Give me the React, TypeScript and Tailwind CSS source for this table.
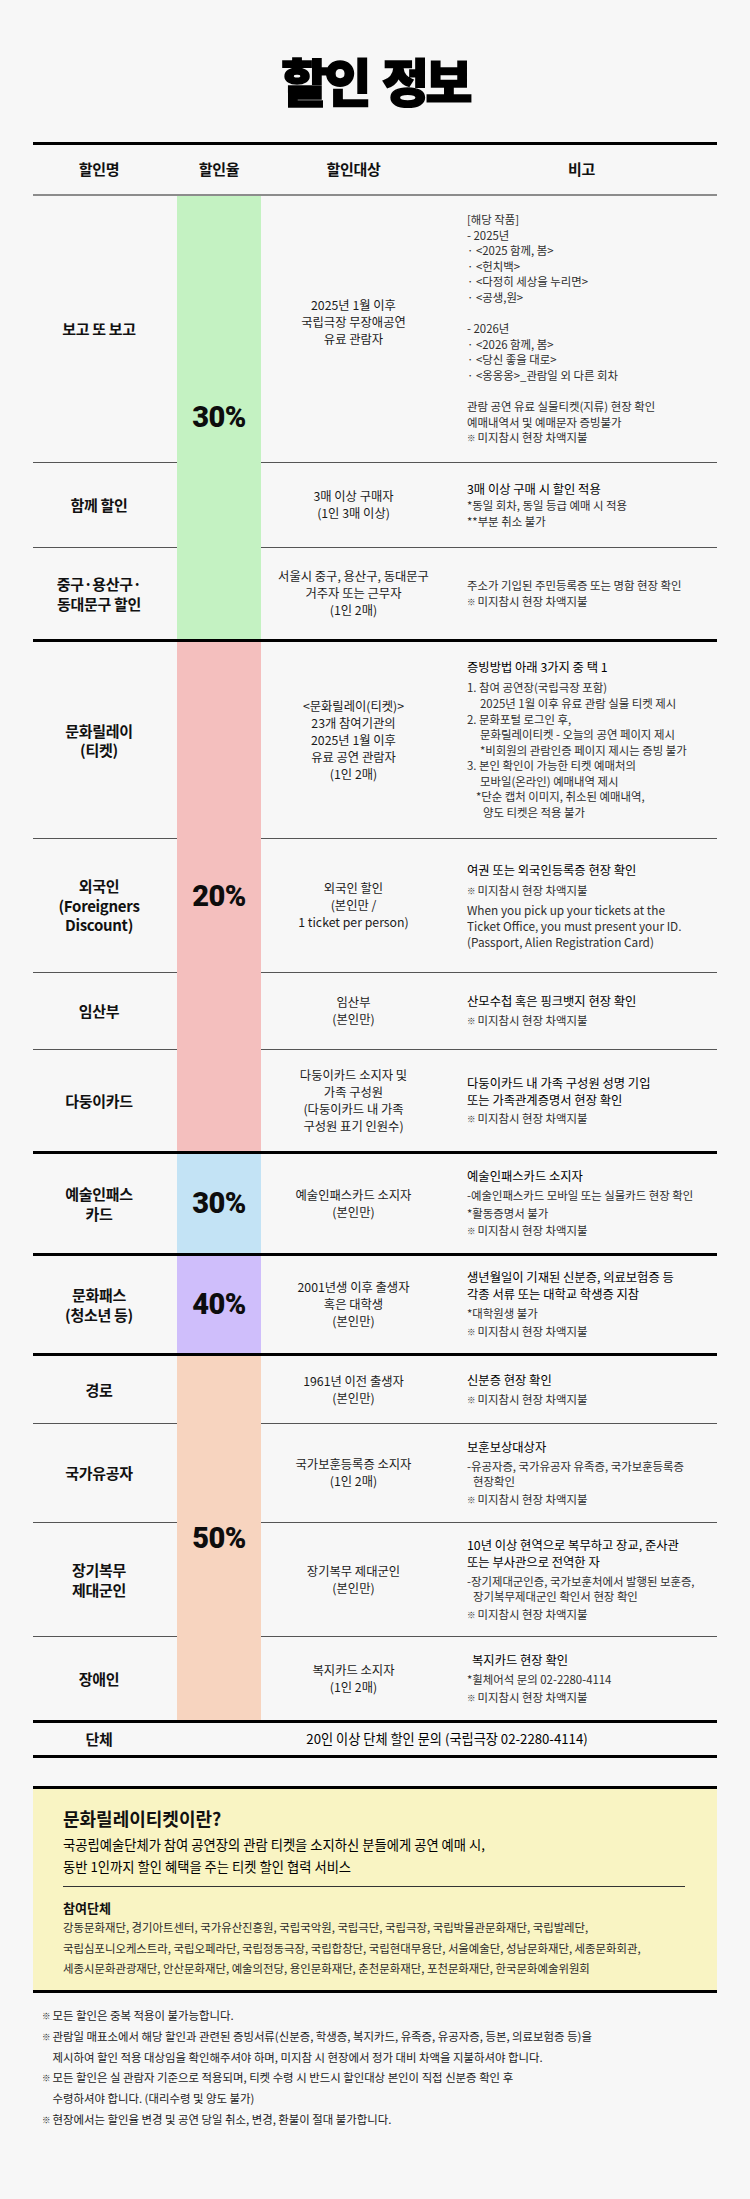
import React from "react";

type RowData = {
  h: string;
  label: React.ReactNode;
  target: React.ReactNode;
  note: React.ReactNode;
  targetClass?: string;
};

const Kome = () => <span className="text-[8.5px] mr-[2px] align-[1px]">※</span>;

function H({ children, className = "" }: { children: React.ReactNode; className?: string }) {
  return <div className={"text-[12.3px] leading-[17px] font-normal text-black " + className}>{children}</div>;
}

function S({ children, className = "" }: { children: React.ReactNode; className?: string }) {
  return <div className={"text-[11.4px] leading-[15.6px] text-[#2e2e2e] " + className}>{children}</div>;
}

function Lines({ items }: { items: string[] }) {
  return (
    <div className="text-[12.3px] leading-[17px] text-center text-[#1a1a1a] whitespace-nowrap">
      {items.map((t, i) => (
        <div key={i}>{t}</div>
      ))}
    </div>
  );
}

function Label({ lines, className = "" }: { lines: string[]; className?: string }) {
  return (
    <div className={"text-[15px] font-bold leading-[19.5px] tracking-[-0.02em] text-center text-[#111] " + className}>
      {lines.map((t, i) => (
        <div key={i}>{t}</div>
      ))}
    </div>
  );
}

const Miji = ({ className = "mt-[2px]" }: { className?: string }) => (
  <S className={className}>
    <Kome />
    미지참시 현장 차액지불
  </S>
);

function Group({ bg, pct, span, rows }: { bg: string; pct: string; span: string; rows: RowData[] }) {
  return (
    <div className="grid grid-cols-[144px_84px_185px_1fr] border-t-[3px] border-black">
      <div className={span + " col-start-2 flex items-center justify-center " + bg}>
        <span className="[font-family:Roboto,'Liberation_Sans',sans-serif] font-black text-[29px] leading-none tracking-[-0.02em] text-[#0d0d0d]">
          {pct}
        </span>
      </div>
      {rows.map((r, i) => (
        <React.Fragment key={i}>
          <div
            className={
              "col-start-1 flex items-center justify-center pr-3 " +
              r.h +
              (i > 0 ? " border-t border-[#555]" : "")
            }
          >
            {r.label}
          </div>
          <div
            className={
              "col-start-3 flex items-center justify-center " +
              (r.targetClass ?? "") +
              (i > 0 ? " border-t border-[#555]" : "")
            }
          >
            {r.target}
          </div>
          <div
            className={
              "col-start-4 flex flex-col justify-center pl-[21px] whitespace-nowrap" +
              (i > 0 ? " border-t border-[#555]" : "")
            }
          >
            {r.note}
          </div>
        </React.Fragment>
      ))}
    </div>
  );
}

const g1: RowData[] = [
  {
    h: "h-[266px]",
    label: <Label lines={["보고 또 보고"]} />,
    targetClass: "pb-[14px]",
    target: <Lines items={["2025년 1월 이후", "국립극장 무장애공연", "유료 관람자"]} />,
    note: (
      <div>
        <S>[해당 작품]</S>
        <S>- 2025년</S>
        <S>· &lt;2025 함께, 봄&gt;</S>
        <S>· &lt;헌치백&gt;</S>
        <S>· &lt;다정히 세상을 누리면&gt;</S>
        <S>· &lt;공생,원&gt;</S>
        <S>&nbsp;</S>
        <S>- 2026년</S>
        <S>· &lt;2026 함께, 봄&gt;</S>
        <S>· &lt;당신 좋을 대로&gt;</S>
        <S>· &lt;옹옹옹&gt;_관람일 외 다른 회차</S>
        <S>&nbsp;</S>
        <S>관람 공연 유료 실물티켓(지류) 현장 확인</S>
        <S>예매내역서 및 예매문자 증빙불가</S>
        <S>
          <Kome />
          미지참시 현장 차액지불
        </S>
      </div>
    ),
  },
  {
    h: "h-[85px]",
    label: <Label lines={["함께 할인"]} />,
    target: <Lines items={["3매 이상 구매자", "(1인 3매 이상)"]} />,
    note: (
      <div>
        <H>3매 이상 구매 시 할인 적용</H>
        <S>*동일 회차, 동일 등급 예매 시 적용</S>
        <S>**부분 취소 불가</S>
      </div>
    ),
  },
  {
    h: "h-[92px]",
    label: <Label lines={["중구·용산구·", "동대문구 할인"]} />,
    target: <Lines items={["서울시 중구, 용산구, 동대문구", "거주자 또는 근무자", "(1인 2매)"]} />,
    note: (
      <div>
        <S>주소가 기입된 주민등록증 또는 명함 현장 확인</S>
        <Miji className="" />
      </div>
    ),
  },
];

const g2: RowData[] = [
  {
    h: "h-[196px]",
    label: <Label lines={["문화릴레이", "(티켓)"]} />,
    target: (
      <Lines items={["<문화릴레이(티켓)>", "23개 참여기관의", "2025년 1월 이후", "유료 공연 관람자", "(1인 2매)"]} />
    ),
    note: (
      <div>
        <H className="mb-[4px]">증빙방법 아래 3가지 중 택 1</H>
        <S>1. 참여 공연장(국립극장 포함)</S>
        <S className="pl-[13px]">2025년 1월 이후 유료 관람 실물 티켓 제시</S>
        <S>2. 문화포털 로그인 후,</S>
        <S className="pl-[13px]">문화릴레이티켓 - 오늘의 공연 페이지 제시</S>
        <S className="pl-[13px]">*비회원의 관람인증 페이지 제시는 증빙 불가</S>
        <S>3. 본인 확인이 가능한 티켓 예매처의</S>
        <S className="pl-[13px]">모바일(온라인) 예매내역 제시</S>
        <S className="pl-[9px]">*단순 캡처 이미지, 취소된 예매내역,</S>
        <S className="pl-[16px]">양도 티켓은 적용 불가</S>
      </div>
    ),
  },
  {
    h: "h-[134px]",
    label: <Label lines={["외국인", "(Foreigners", "Discount)"]} className="leading-[18.5px]" />,
    target: <Lines items={["외국인 할인", "(본인만 /", "1 ticket per person)"]} />,
    note: (
      <div>
        <H>여권 또는 외국인등록증 현장 확인</H>
        <Miji className="mt-[4px]" />
        <div className="mt-[4px] text-[11.8px] leading-[15.6px] text-[#2e2e2e]">
          <div>When you pick up your tickets at the</div>
          <div>Ticket Office, you must present your ID.</div>
          <div>(Passport, Alien Registration Card)</div>
        </div>
      </div>
    ),
  },
  {
    h: "h-[77px]",
    label: <Label lines={["임산부"]} />,
    target: <Lines items={["임산부", "(본인만)"]} />,
    note: (
      <div>
        <H>산모수첩 혹은 핑크뱃지 현장 확인</H>
        <Miji className="mt-[3px]" />
      </div>
    ),
  },
  {
    h: "h-[102px]",
    label: <Label lines={["다둥이카드"]} />,
    target: <Lines items={["다둥이카드 소지자 및", "가족 구성원", "(다둥이카드 내 가족", "구성원 표기 인원수)"]} />,
    note: (
      <div>
        <H>다둥이카드 내 가족 구성원 성명 기입</H>
        <H>또는 가족관계증명서 현장 확인</H>
        <Miji className="mt-[2px]" />
      </div>
    ),
  },
];

const g3: RowData[] = [
  {
    h: "h-[99px]",
    label: <Label lines={["예술인패스", "카드"]} />,
    target: <Lines items={["예술인패스카드 소지자", "(본인만)"]} />,
    note: (
      <div>
        <H>예술인패스카드 소지자</H>
        <S className="mt-[3px]">-예술인패스카드 모바일 또는 실물카드 현장 확인</S>
        <S className="mt-[2px]">*활동증명서 불가</S>
        <Miji />
      </div>
    ),
  },
];

const g4: RowData[] = [
  {
    h: "h-[97px]",
    label: <Label lines={["문화패스", "(청소년 등)"]} />,
    target: <Lines items={["2001년생 이후 출생자", "혹은 대학생", "(본인만)"]} />,
    note: (
      <div>
        <H>생년월일이 기재된 신분증, 의료보험증 등</H>
        <H>각종 서류 또는 대학교 학생증 지참</H>
        <S className="mt-[3px]">*대학원생 불가</S>
        <Miji />
      </div>
    ),
  },
];

const g5: RowData[] = [
  {
    h: "h-[67px]",
    label: <Label lines={["경로"]} />,
    target: <Lines items={["1961년 이전 출생자", "(본인만)"]} />,
    note: (
      <div>
        <H>신분증 현장 확인</H>
        <Miji className="mt-[3px]" />
      </div>
    ),
  },
  {
    h: "h-[99px]",
    label: <Label lines={["국가유공자"]} />,
    target: <Lines items={["국가보훈등록증 소지자", "(1인 2매)"]} />,
    note: (
      <div>
        <H>보훈보상대상자</H>
        <S className="mt-[3px]">-유공자증, 국가유공자 유족증, 국가보훈등록증</S>
        <S className="pl-[6px]">현장확인</S>
        <Miji />
      </div>
    ),
  },
  {
    h: "h-[114px]",
    label: <Label lines={["장기복무", "제대군인"]} />,
    target: <Lines items={["장기복무 제대군인", "(본인만)"]} />,
    note: (
      <div>
        <H>10년 이상 현역으로 복무하고 장교, 준사관</H>
        <H>또는 부사관으로 전역한 자</H>
        <S className="mt-[3px]">-장기제대군인증, 국가보훈처에서 발행된 보훈증,</S>
        <S className="pl-[6px]">장기복무제대군인 확인서 현장 확인</S>
        <Miji />
      </div>
    ),
  },
  {
    h: "h-[84px]",
    label: <Label lines={["장애인"]} />,
    target: <Lines items={["복지카드 소지자", "(1인 2매)"]} />,
    note: (
      <div>
        <H className="pl-[5px]">복지카드 현장 확인</H>
        <S className="mt-[3px]">*휠체어석 문의 02-2280-4114</S>
        <Miji />
      </div>
    ),
  },
];

export default function App() {
  return (
    <div className="w-[750px] min-h-[2199px] bg-[#f7f7f7] text-[#1a1a1a] [font-family:'Noto_Sans_CJK_KR','Noto_Sans_KR',sans-serif]">
      {/* Title */}
      <div className="h-[142px] pt-[55px] text-center">
        <h1 className="text-[51px] leading-none font-black tracking-[-0.07em] [word-spacing:0.12em] [-webkit-text-stroke:1.6px_black] text-black">
          할인 정보
        </h1>
      </div>

      <div className="mx-[33px]">
        {/* Header */}
        <div className="grid grid-cols-[144px_84px_185px_1fr] h-[54px] border-t-[3px] border-b-2 border-t-black border-b-[#8c8c8c] text-[15px] font-bold tracking-[-0.02em] text-[#111]">
          <div className="flex items-center justify-center pr-3">할인명</div>
          <div className="flex items-center justify-center">할인율</div>
          <div className="flex items-center justify-center">할인대상</div>
          <div className="flex items-center justify-center">비고</div>
        </div>

        <div className="[&>div:first-child]:border-t-0">
          <Group bg="bg-[#c4f2c2]" pct="30%" span="row-[1/span_3]" rows={g1} />
        </div>
        <Group bg="bg-[#f4bfbe]" pct="20%" span="row-[1/span_4]" rows={g2} />
        <Group bg="bg-[#c3e3f5]" pct="30%" span="row-[1/span_1]" rows={g3} />
        <Group bg="bg-[#cfbefb]" pct="40%" span="row-[1/span_1]" rows={g4} />
        <Group bg="bg-[#f7d4bf]" pct="50%" span="row-[1/span_4]" rows={g5} />

        {/* 단체 */}
        <div className="grid grid-cols-[144px_1fr] h-[38px] border-t-[3px] border-b-[3px] border-black">
          <div className="flex items-center justify-center pr-3">
            <Label lines={["단체"]} />
          </div>
          <div className="flex items-center justify-center text-[13.2px] font-normal text-black">
            20인 이상 단체 할인 문의 (국립극장 02-2280-4114)
          </div>
        </div>

        {/* Info box */}
        <div className="mt-[28px] h-[207px] border-t-[3px] border-b-[3px] border-black bg-[#f9f4c3] pl-[30px] pr-[32px] pt-[16px]">
          <div className="text-[18px] leading-[26px] font-bold text-[#111]">문화릴레이티켓이란?</div>
          <div className="mt-[3px] text-[13.3px] leading-[22px] font-normal text-black">
            <div>국공립예술단체가 참여 공연장의 관람 티켓을 소지하신 분들에게 공연 예매 시,</div>
            <div>동반 1인까지 할인 혜택을 주는 티켓 할인 협력 서비스</div>
          </div>
          <div className="mt-[8px] h-px bg-[#333]" />
          <div className="mt-[12px] text-[13px] leading-[18px] font-bold text-[#111]">참여단체</div>
          <div className="text-[11.4px] leading-[20.5px] text-[#2a2a2a] whitespace-nowrap">
            <div>강동문화재단, 경기아트센터, 국가유산진흥원, 국립국악원, 국립극단, 국립극장, 국립박물관문화재단, 국립발레단,</div>
            <div>국립심포니오케스트라, 국립오페라단, 국립정동극장, 국립합창단, 국립현대무용단, 서울예술단, 성남문화재단, 세종문화회관,</div>
            <div>세종시문화관광재단, 안산문화재단, 예술의전당, 용인문화재단, 춘천문화재단, 포천문화재단, 한국문화예술위원회</div>
          </div>
        </div>
      </div>

      {/* Notes */}
      <div className="mt-[12px] pl-[42px] text-[11.4px] leading-[20.8px] text-[#222]">
        {[
          ["모든 할인은 중복 적용이 불가능합니다."],
          [
            "관람일 매표소에서 해당 할인과 관련된 증빙서류(신분증, 학생증, 복지카드, 유족증, 유공자증, 등본, 의료보험증 등)을",
            "제시하여 할인 적용 대상임을 확인해주셔야 하며, 미지참 시 현장에서 정가 대비 차액을 지불하셔야 합니다.",
          ],
          [
            "모든 할인은 실 관람자 기준으로 적용되며, 티켓 수령 시 반드시 할인대상 본인이 직접 신분증 확인 후",
            "수령하셔야 합니다. (대리수령 및 양도 불가)",
          ],
          ["현장에서는 할인율 변경 및 공연 당일 취소, 변경, 환불이 절대 불가합니다."],
        ].map((lines, i) => (
          <div key={i} className="flex">
            <span className="w-[10.5px] shrink-0 text-[8.5px]">※</span>
            <div className="whitespace-nowrap">
              {lines.map((l, j) => (
                <div key={j}>{l}</div>
              ))}
            </div>
          </div>
        ))}
      </div>
    </div>
  );
}
